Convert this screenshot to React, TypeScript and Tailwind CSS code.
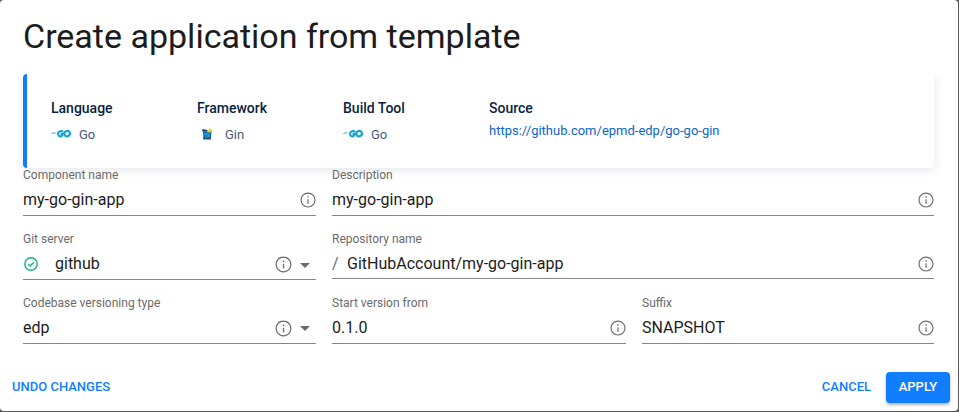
import type { ReactNode } from 'react';

function InfoIcon({ size = 18 }: { size?: number }) {
  return (
    <svg width={size} height={size} viewBox="0 0 24 24" className="shrink-0 text-[#6b6b6b]" fill="currentColor">
      <path d="M11.200 7h1.800v1.800h-1.800zm0 4h1.600v6h-1.600zm.8-9C6.48 2 2 6.48 2 12s4.48 10 10 10 10-4.480 10-10S17.520 2 12 2m0 18.500c-4.690 0-8.500-3.810-8.500-8.500s3.810-8.500 8.500-8.500 8.500 3.810 8.500 8.500-3.810 8.500-8.500 8.500" />
    </svg>
  );
}

function Caret() {
  return (
    <svg width="24" height="24" viewBox="0 0 24 24" fill="#6b6b6b" className="shrink-0">
      <path d="m7 10 5 5 5-5z" />
    </svg>
  );
}

function CheckIcon() {
  return (
    <svg width="14" height="14" viewBox="0 0 14 14" fill="none" stroke="#18b57c" className="shrink-0">
      <circle cx="7" cy="7" r="6.200" strokeWidth="1.400" />
      <path d="m4.200 7.200 2 1.900 3.700-3.900" strokeWidth="1.400" />
    </svg>
  );
}

function GoLogo() {
  return (
    <svg width="20" height="20" viewBox="0 0 20 20" fill="none" stroke="#16a5d2">
      <path d="M1.200 8.500h3.600M0 9.500h4.400" strokeWidth=".8" opacity=".6" />
      <path d="M12 8.100C10.600 6.300 7.500 7.100 7 9.500c-.4 2.200 1.700 3.500 3.500 2.500.8-.5 1.100-1.200 1.300-2H9.500" strokeWidth="2.100" />
      <ellipse cx="16.100" cy="9.700" rx="2.800" ry="2.600" transform="rotate(-25 16.100 9.700)" strokeWidth="2.200" />
    </svg>
  );
}

function GinLogo() {
  return (
    <svg width="20" height="20" viewBox="0 0 20 20">
      <path d="M5.500 6h9.300l-1.300 9.500H7z" fill="#1268a3" />
      <path d="M7 8.500h6.400l-.8 5.400H7.800z" fill="#1689ca" />
      <path d="M5.200 5.300h2.400v1.500H5.200zM6.300 12.500h1.300v3H6.300zM12.700 12.500h1v3h-1z" fill="#203b50" />
      <path d="M9 6.500 12 5.500l.8-1.700h1.200L13.500 5.500l1.400 1-1.600 2-3-.5z" fill="#ead34f" />
      <path d="m8.200 5.700 2.100 1.100M9 14.400h3.200" stroke="#173d62" />
      <path d="M8.200 10h1.600M11 12h1.500" stroke="#67bce0" strokeWidth=".7" />
    </svg>
  );
}

function Fact({ title, logo, value }: { title: string; logo: ReactNode; value: string }) {
  return (
    <div className="w-[146px]">
      <h2 className="text-[14px] leading-5 font-medium text-[#091f3f]">{title}</h2>
      <div className="mt-[6px] flex h-5 items-center gap-2 text-[13px] text-[#495a73]">
        {logo}
        <span className="pt-px">{value}</span>
      </div>
    </div>
  );
}

type FieldProps = {
  label: string;
  value: string;
  prefix?: ReactNode;
  select?: boolean;
  wide?: boolean;
  short?: boolean;
};

function Field({ label, value, prefix, select, wide, short }: FieldProps) {
  const iconOffset = prefix ? 'pt-[3px]' : select ? 'pt-[2px]' : 'pt-px';
  return (
    <div className={wide ? 'col-span-2 h-16' : 'h-16'}>
      <div className="h-[15px] text-[12px] leading-[15px] text-[#6b6b6b]">{label}</div>
      <div
        className={`flex items-center border-b border-[#858585] text-[16px] text-[#1c1c1c] ${short ? 'h-[32px]' : 'h-[33px]'}`}
      >
        {prefix}
        <span className={short ? 'grow pt-[2px]' : 'grow pt-px'}>{value}</span>
        <span className={`-mr-[0.5px] flex items-center ${iconOffset}`}>
          <InfoIcon size={select ? 19 : 18} />
          {select && <Caret />}
        </span>
      </div>
    </div>
  );
}

export default function App() {
  return (
    <div className="h-[412px] w-[959px] bg-[#5c5c5c] pr-px pb-px font-['Roboto',sans-serif]">
      <main className="flex h-[411px] w-[958px] flex-col overflow-hidden rounded-[4px] bg-white">
        <header className="h-[74px] shrink-0 px-[23px] pt-[15px]">
          <h1 className="text-[34px] leading-[42px] text-[#1c1c1c]">Create application from template</h1>
        </header>
        <div className="h-[288px] shrink-0 overflow-hidden px-[23px]">
          <section className="flex h-[94px] w-[911px] rounded-[4px] border-l-4 border-[#117dff] bg-white pt-6 pl-6 shadow-[0_2px_10px_rgba(9,31,63,0.11)]">
            <Fact title="Language" logo={<GoLogo />} value="Go" />
            <Fact title="Framework" logo={<GinLogo />} value="Gin" />
            <Fact title="Build Tool" logo={<GoLogo />} value="Go" />
            <div>
              <h2 className="text-[14px] leading-5 font-medium text-[#091f3f]">Source</h2>
              <a className="mt-[3px] block text-[13px] leading-5 text-[#0b66cc]">https://github.com/epmd-edp/go-go-gin</a>
            </div>
          </section>
          <form className="grid w-[911px] grid-cols-[293px_294px_292px] gap-x-4">
            <Field label="Component name" value="my-go-gin-app" />
            <Field label="Description" value="my-go-gin-app" wide />
            <Field
              label="Git server"
              value="github"
              prefix={<span className="flex w-8 pt-px pl-px"><CheckIcon /></span>}
              select
            />
            <Field
              label="Repository name"
              value="GitHubAccount/my-go-gin-app"
              prefix={<span className="w-[15px] pt-[2px] text-[#6b6b6b]">/</span>}
              wide
              short
            />
            <Field label="Codebase versioning type" value="edp" select />
            <Field label="Start version from" value="0.1.0" />
            <Field label="Suffix" value="SNAPSHOT" />
          </form>
        </div>
        <footer className="flex h-[49px] items-center justify-between pr-2 pl-3 text-[13px] font-medium text-[#117dff]">
          <button>UNDO CHANGES</button>
          <div className="flex items-center gap-[15px]">
            <button>CANCEL</button>
            <button className="mt-px h-[31px] w-16 rounded-[4px] bg-[#117dff] pb-px text-white shadow-[0_2px_3px_rgba(0,0,0,0.3)]">APPLY</button>
          </div>
        </footer>
      </main>
    </div>
  );
}
